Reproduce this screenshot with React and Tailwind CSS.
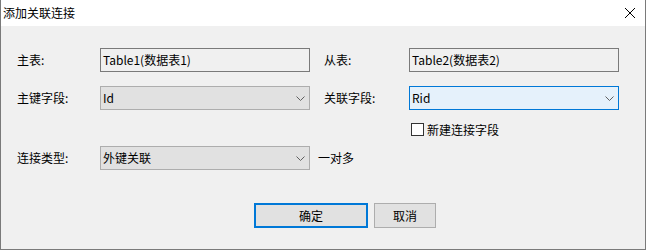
const font = { fontFamily: '"Noto Sans CJK SC", "Microsoft YaHei", "Noto Sans", sans-serif' };

function Chevron() {
  return (
    <svg width="9" height="5" viewBox="0 0 9 5" className="shrink-0">
      <path d="M0.5 0.5 L4.5 4.5 L8.5 0.5" fill="none" stroke="#606060" strokeWidth="1" />
    </svg>
  );
}

function TextBox({ value }) {
  return (
    <div className="w-[210px] h-[24px] border border-[#7a7a7a] bg-[#f0f0f0] flex items-center pl-[2px] text-[12px] text-black">
      {value}
    </div>
  );
}

function Combo({ value, focused }) {
  return (
    <div
      className={
        focused
          ? "w-[210px] h-[24px] border border-[#0078d7] bg-[#e5f1fb] flex items-center justify-between pl-[2px] pr-[4px] text-[12px] text-black"
          : "w-[210px] h-[24px] border border-[#adadad] bg-[#e1e1e1] flex items-center justify-between pl-[2px] pr-[4px] text-[12px] text-black"
      }
    >
      <span>{value}</span>
      <Chevron />
    </div>
  );
}

export default function App() {
  return (
    <div style={font} className="w-[646px] h-[250px] flex flex-col border-x border-b border-[#7a7a7a] bg-[#f0f0f0] text-[12px] text-black">
      <div className="h-[26px] bg-white flex items-center justify-between pl-[2px] pr-[10px] shrink-0">
        <span className="text-[12px]">添加关联连接</span>
        <svg width="10" height="10" viewBox="0 0 10 10">
          <path d="M0 0 L10 10 M10 0 L0 10" stroke="#000" strokeWidth="1" />
        </svg>
      </div>

      <div className="flex flex-col pt-[22px] pl-[16px]">
        <div className="flex items-center h-[24px]">
          <span className="w-[83px]">主表:</span>
          <TextBox value="Table1(数据表1)" />
          <span className="w-[85px] ml-[14px]">从表:</span>
          <TextBox value="Table2(数据表2)" />
        </div>

        <div className="flex items-center h-[24px] mt-[14px]">
          <span className="w-[83px]">主键字段:</span>
          <Combo value="Id" />
          <span className="w-[85px] ml-[14px]">关联字段:</span>
          <Combo value="Rid" focused />
        </div>

        <div className="flex items-center h-[13px] mt-[13px] pl-[394px]">
          <div className="w-[13px] h-[13px] border border-[#333] bg-white" />
          <span className="ml-[3px]">新建连接字段</span>
        </div>

        <div className="flex items-center h-[24px] mt-[10px]">
          <span className="w-[83px]">连接类型:</span>
          <Combo value="外键关联" />
          <span className="ml-[8px]">一对多</span>
        </div>

        <div className="flex items-center mt-[33px] pl-[237px] gap-[6px]">
          <button className="w-[114px] h-[25px] border-2 border-[#0078d7] bg-[#e1e1e1] flex items-center justify-center text-[12px]">
            确定
          </button>
          <button className="w-[62px] h-[25px] border border-[#adadad] bg-[#e1e1e1] flex items-center justify-center text-[12px]">
            取消
          </button>
        </div>
      </div>
    </div>
  );
}
